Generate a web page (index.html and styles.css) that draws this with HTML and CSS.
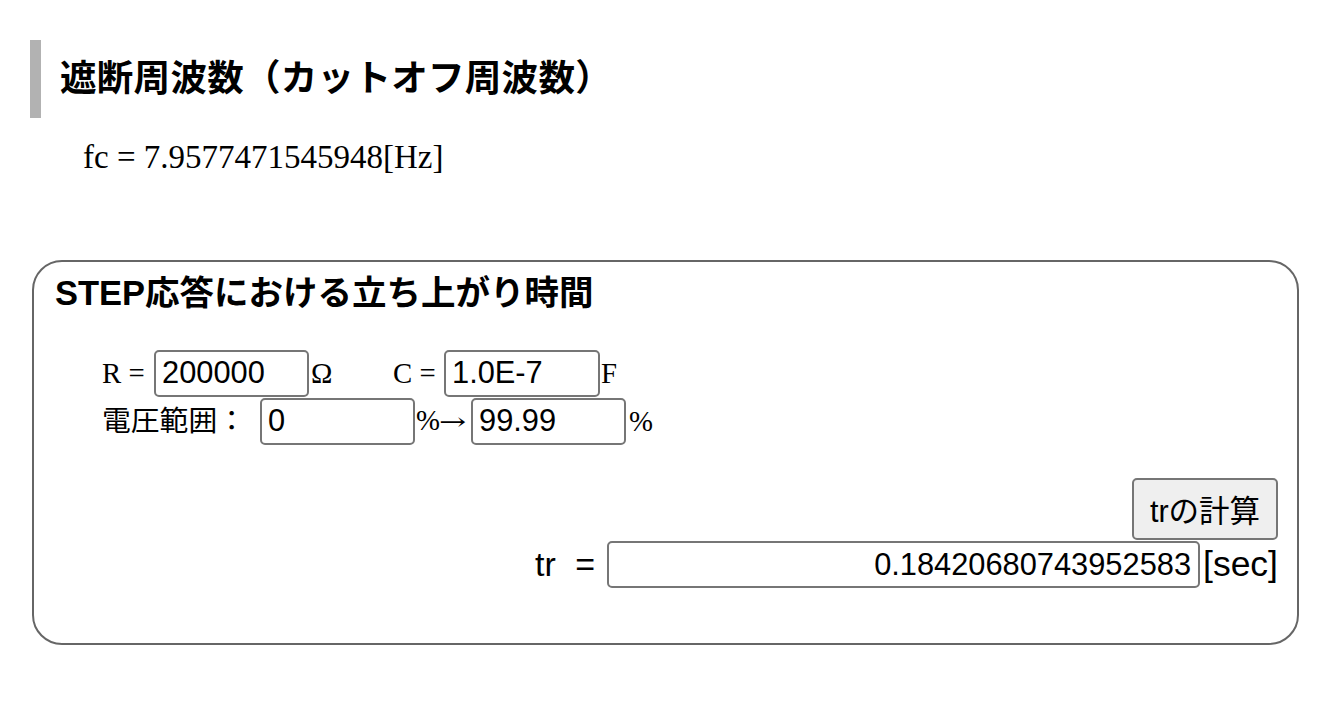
FILE: index.html
```html
<!DOCTYPE html>
<html lang="ja">
<head>
<meta charset="utf-8">
<title>遮断周波数</title>
<link rel="stylesheet" href="styles.css">
</head>
<body>
<h2 class="title">遮断周波数（カットオフ周波数）</h2>
<p class="fc">fc = 7.9577471545948[Hz]</p>

<section class="panel">
  <h3 class="panel-title">STEP応答における立ち上がり時間</h3>
  <div class="row">
    <span class="lbl lbl-r">R =</span>
    <input class="field" type="text" value="200000">
    <span class="unit unit-ohm">Ω</span>
    <span class="lbl lbl-c">C =</span>
    <input class="field field-c" type="text" value="1.0E-7">
    <span class="unit unit-f">F</span>
  </div>
  <div class="row">
    <span class="lbl lbl-v">電圧範囲：</span>
    <input class="field" type="text" value="0">
    <span class="unit unit-arrow">%<span class="arrow">→</span></span>
    <input class="field" type="text" value="99.99">
    <span class="unit unit-pct">%</span>
  </div>
  <div class="row-btn">
    <button class="calc" type="button">trの計算</button>
  </div>
  <div class="row-result">
    <span class="tr-lbl">tr =</span>
    <input class="field result" type="text" value="0.18420680743952583">
    <span class="sec">[sec]</span>
  </div>
</section>
</body>
</html>
```

FILE: styles.css
```css
html, body {
  margin: 0;
  padding: 0;
  background: #ffffff;
  color: #000000;
}

body {
  padding: 40px 31px 0 30px;
  font-family: "Liberation Serif", "Noto Sans CJK JP", serif;
}

.title {
  margin: 0;
  height: 78px;
  line-height: 78px;
  border-left: 11px solid #b2b2b2;
  padding-left: 19px;
  font-family: "Liberation Sans", "Noto Sans CJK JP", sans-serif;
  font-weight: 700;
  font-size: 36.5px;
  letter-spacing: 0.3px;
}

.fc {
  margin: 19px 0 0 53px;
  font-size: 33px;
  line-height: 40px;
}

.panel {
  margin-top: 83px;
  margin-left: 2px;
  height: 385px;
  box-sizing: border-box;
  border: 2px solid #666666;
  border-radius: 30px;
  padding: 11px 19px 0 21px;
}

.panel-title {
  margin: 0 0 36px 0;
  height: 40px;
  line-height: 40px;
  font-family: "Liberation Sans", "Noto Sans CJK JP", sans-serif;
  font-weight: 700;
  font-size: 34.5px;
}

.row {
  display: flex;
  align-items: center;
  height: 48px;
  padding-left: 47px;
  font-size: 28.8px;
}

.lbl, .unit {
  white-space: nowrap;
  line-height: 47px;
}

.lbl-r { width: 52px; }
.unit-ohm { margin-left: 2px; width: 82px; }
.lbl-c { width: 51px; }
.field-c { width: 156px !important; }
.unit-f { margin-left: 1px; }
.lbl-v { width: 158px; }
.unit-arrow { width: 55px; margin-left: 1px; }
.arrow {
  font-family: "DejaVu Serif", serif;
  font-size: 24px;
  display: inline-block;
  transform: scaleX(1.35);
  transform-origin: left center;
  margin-left: -1px;
}
.unit-pct { margin-left: 3px; }

.field {
  box-sizing: border-box;
  width: 155px;
  height: 47px;
  margin: 0;
  padding: 0 6px;
  border: 2px solid #767676;
  border-radius: 5px;
  background: #ffffff;
  font-family: "Liberation Sans", "Noto Sans CJK JP", sans-serif;
  font-size: 30.8px;
  color: #000000;
  outline: none;
}

.row-btn {
  display: flex;
  justify-content: flex-end;
  margin-top: 33px;
}

.calc {
  box-sizing: border-box;
  width: 146px;
  height: 62px;
  margin: 0;
  padding: 0;
  border: 2px solid #767676;
  border-radius: 5px;
  background: #efefef;
  font-family: "Liberation Sans", "Noto Sans CJK JP", sans-serif;
  font-size: 30.5px;
  color: #000000;
}

.row-result {
  display: flex;
  justify-content: flex-end;
  align-items: center;
  margin-top: 1px;
  height: 47px;
  font-family: "Liberation Sans", "Noto Sans CJK JP", sans-serif;
  font-size: 30.8px;
}

.tr-lbl {
  margin-right: 12px;
  font-size: 34px;
  word-spacing: 10px;
}

.result {
  width: 593px;
  text-align: right;
  padding-right: 7px;
}

.sec {
  margin-left: 3px;
  font-size: 35.5px;
}
```
